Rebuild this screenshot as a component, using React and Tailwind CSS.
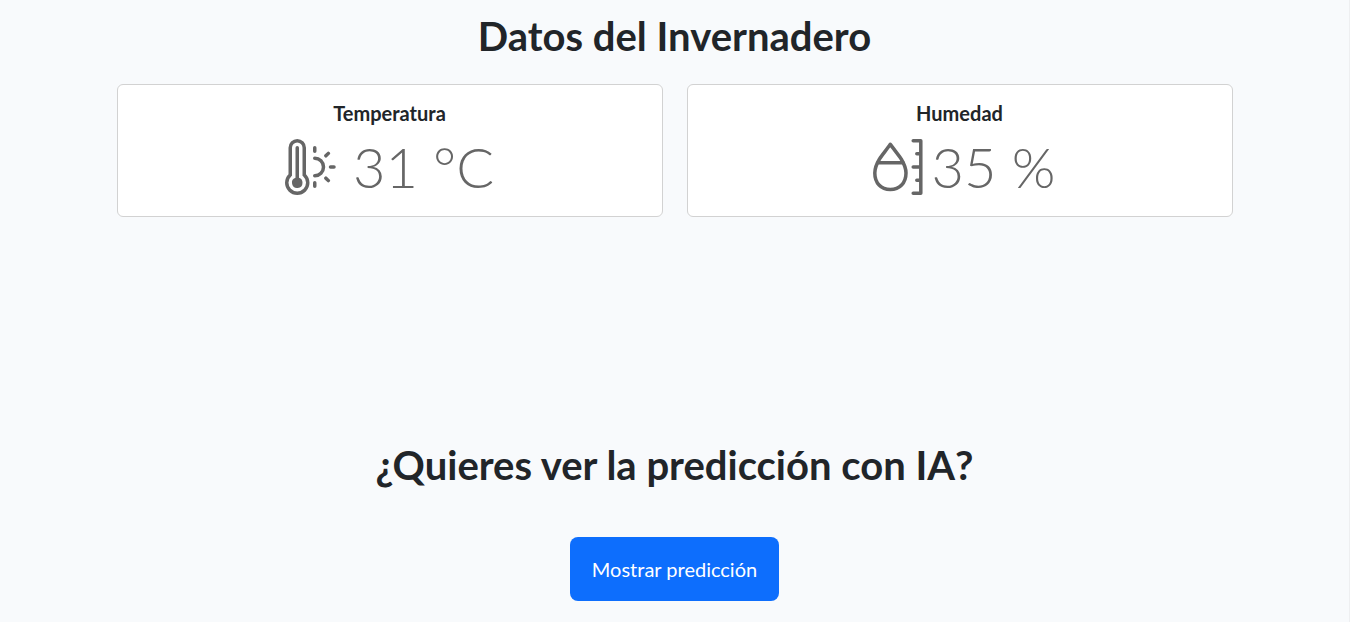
import { BsThermometerSun } from "react-icons/bs";

function HumidityIcon() {
  return (
    <svg
      aria-hidden="true"
      viewBox="0 0 52 56"
      className="ml-2 h-14 w-[52px]"
      fill="none"
      stroke="currentColor"
      strokeWidth="3.5"
      strokeLinecap="round"
      strokeLinejoin="round"
    >
      <path d="M18.3 5.3 C15.5 9.5 10.5 15.5 7.5 20 C4.5 25 2.8 28.5 2.8 34 C2.8 44 9 50.6 18.3 50.6 C27.6 50.6 34 44 34 34 C34 28.5 32.2 25 29.2 20 C26.2 15.5 21.2 9.5 18.3 5.3 Z" />
      <path d="M6 23.7 H31" />
      <path d="M41.2 1.8 H48.8 V54.2 H41.2 M44.8 14.7 H48.8 M41.2 28 H48.8 M44.8 41.2 H48.8" />
    </svg>
  );
}

function Card({ title, value, icon, gap }) {
  return (
    <section className="flex-1 rounded-md border border-[#d2d2d2] bg-white p-4 text-center">
      <h2 className="mb-2 text-xl leading-6 font-bold">{title}</h2>
      <div className={`flex items-center justify-center text-[#666666] ${gap}`}>
        {icon}
        <p className="text-[56px] leading-[67px] font-light">{value}</p>
      </div>
    </section>
  );
}

export default function App() {
  return (
    <main className="min-h-screen border-r border-[#eeeff1] bg-[#f8fafc] font-['Lato',sans-serif] text-[#212529]">
      <div className="mx-auto max-w-[1140px] px-3 pt-3 text-center">
        <h1 className="mb-6 text-[40px] leading-[48px] font-bold">Datos del Invernadero</h1>
        <div className="flex gap-6">
          <Card
            title="Temperatura"
            value="31 °C"
            icon={<BsThermometerSun aria-hidden="true" className="size-14" />}
            gap="gap-3"
          />
          <Card title="Humedad" value="35 %" icon={<HumidityIcon />} gap="gap-2" />
        </div>
        <h2 className="mt-56 mb-12 text-[40px] leading-[48px] font-bold">¿Quieres ver la predicción con IA?</h2>
        <button type="button" className="rounded-lg bg-[#0d6efd] px-[22px] py-4 text-xl leading-8 text-white">
          Mostrar predicción
        </button>
      </div>
    </main>
  );
}
